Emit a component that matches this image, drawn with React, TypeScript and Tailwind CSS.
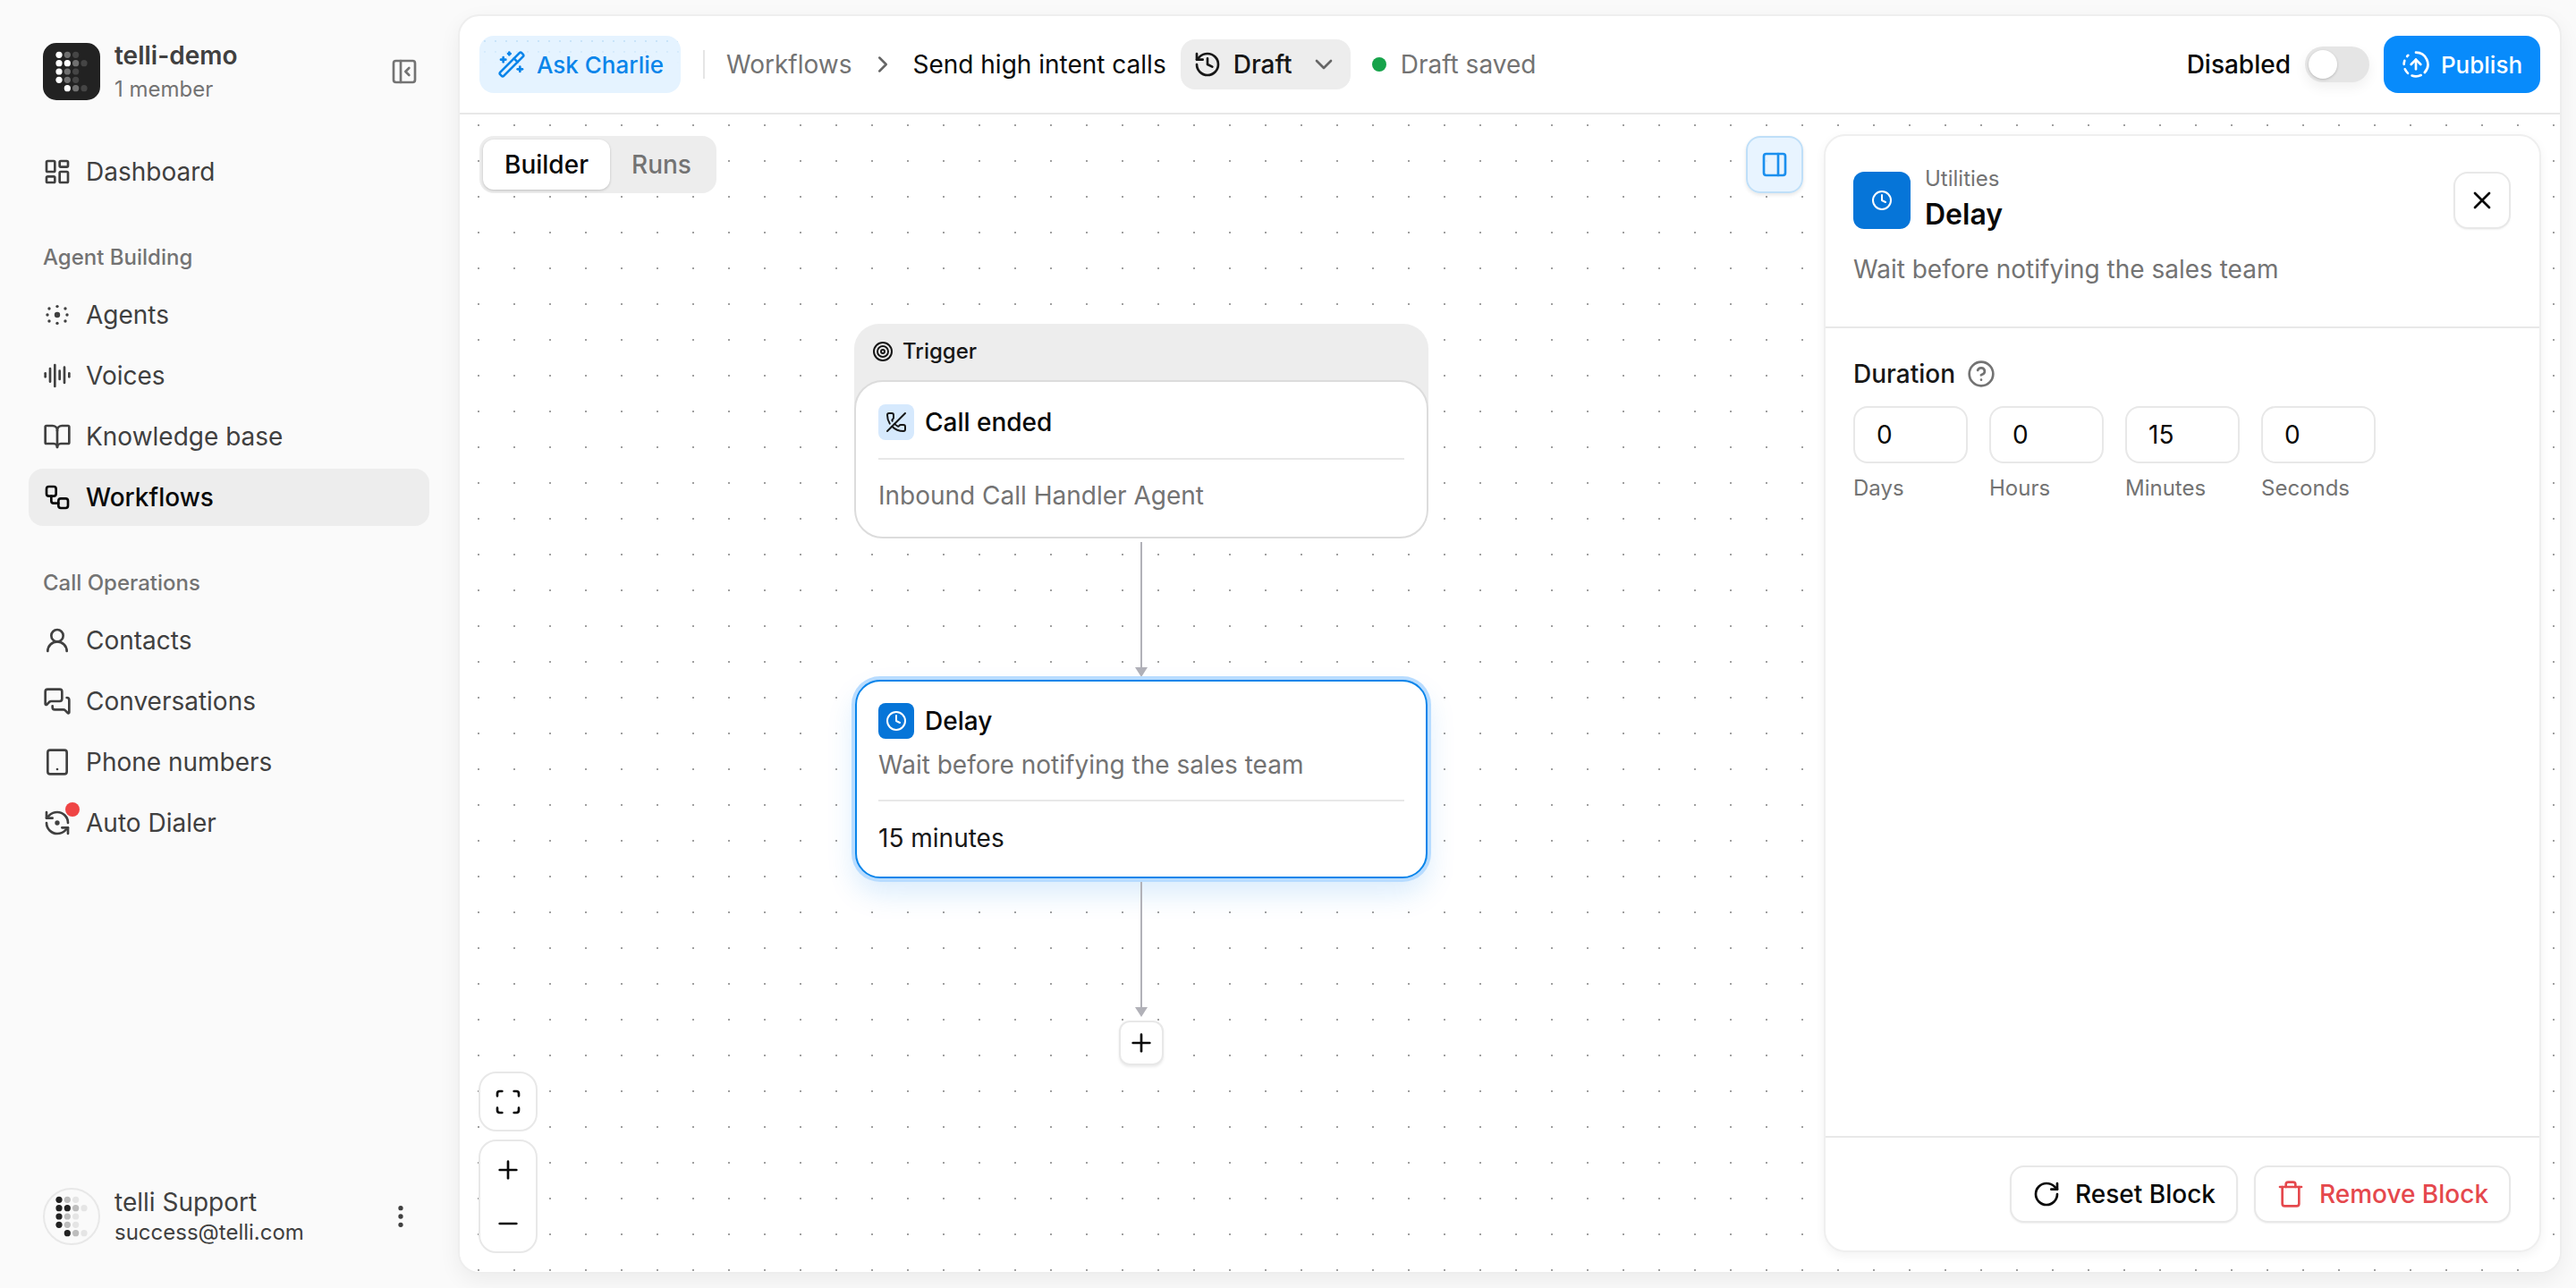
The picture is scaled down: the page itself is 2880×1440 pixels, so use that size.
import React from "react";
import {
  LayoutDashboard, AudioLines, BookOpen, Workflow, UserRound, MessagesSquare, Tablet, EllipsisVertical, WandSparkles,
  ChevronRight, ChevronDown, History, CircleFadingArrowUp, PanelRight, Clock, X, CircleHelp, RotateCw, Trash, Scan,
  Plus, Minus, PhoneOff, Target, PanelLeftClose, RefreshCcwDot,
} from "lucide-react";

const LOGO: (number | null)[][] = [
  [0, 1, 2, null],
  [0, 0, 1, 2],
  [0, 1, 2, null],
  [0, 1, 2, null],
  [null, 0, 1, 2],
];

function Mark({ colors }: { colors: string[] }) {
  return (
    <>
      {LOGO.map((row, r) =>
        row.map((c, i) =>
          c === null ? null : (
            <circle key={`${r}-${i}`} cx={18 + i * 9.33} cy={13.33 + r * 9.33} r={3.6} fill={colors[c]} />
          ),
        ),
      )}
    </>
  );
}

function AgentsIcon() {
  const pts = [[16, 6.6], [16, 25.4], [5, 16], [27, 16], [7, 9], [25, 9], [7, 23], [25, 23]];
  return (
    <svg width="32" height="32" viewBox="0 0 32 32" fill="currentColor">
      <circle cx="16" cy="16" r="3.2" />
      {pts.map(([x, y]) => (
        <circle key={`${x}-${y}`} cx={x} cy={y} r={1.7} />
      ))}
    </svg>
  );
}

function NavItem({ icon, label, active }: { icon: React.ReactNode; label: string; active?: boolean }) {
  return (
    <div className={`flex h-16 items-center gap-4 rounded-2xl px-4 text-[28px] ${active ? "bg-[#ededed] font-medium text-[#0a0a0a]" : "text-[#404040]"}`}>
      <span className="flex h-8 w-8 shrink-0 items-center justify-center">{icon}</span>
      <span>{label}</span>
    </div>
  );
}

function GroupLabel({ children }: { children: React.ReactNode }) {
  return <div className="flex h-10 items-center px-4 text-[24px] font-medium text-[#737373]">{children}</div>;
}

function Sidebar() {
  return (
    <aside className="flex h-full w-[512px] shrink-0 flex-col px-8 pb-12 pt-12">
      <div className="flex h-16 items-center px-4">
        <svg width="64" height="64" viewBox="0 0 64 64" className="shrink-0">
          <rect width="64" height="64" rx="15" fill="#222222" />
          <Mark colors={["#ffffff", "#707070", "#454545"]} />
        </svg>
        <div className="ml-4 flex flex-col">
          <span className="text-[28px] font-semibold leading-10 text-[#404040]">telli-demo</span>
          <span className="text-[24px] leading-9 text-[#737373]">1 member</span>
        </div>
        <PanelLeftClose className="ml-auto mr-[-4px] text-[#737373]" size={32} strokeWidth={2} />
      </div>

      <nav className="mt-12 flex flex-col gap-1">
        <NavItem icon={<LayoutDashboard size={32} strokeWidth={2} />} label="Dashboard" />
      </nav>
      <div className="mt-[44px]">
        <GroupLabel>Agent Building</GroupLabel>
      </div>
      <nav className="mt-3 flex flex-col gap-1">
        <NavItem icon={<AgentsIcon />} label="Agents" />
        <NavItem icon={<AudioLines size={32} strokeWidth={2} />} label="Voices" />
        <NavItem icon={<BookOpen size={32} strokeWidth={2} />} label="Knowledge base" />
        <NavItem icon={<Workflow size={32} strokeWidth={2} />} label="Workflows" active />
      </nav>
      <div className="mt-[44px]">
        <GroupLabel>Call Operations</GroupLabel>
      </div>
      <nav className="mt-3 flex flex-col gap-1">
        <NavItem icon={<UserRound size={32} strokeWidth={2} />} label="Contacts" />
        <NavItem icon={<MessagesSquare size={32} strokeWidth={2} />} label="Conversations" />
        <NavItem icon={<Tablet size={32} strokeWidth={2} />} label="Phone numbers" />
        <NavItem
          icon={
            <span className="relative">
              <RefreshCcwDot size={32} strokeWidth={2} />
              <span className="absolute right-[-9px] top-[-7px] h-4 w-4 rounded-full bg-[#ef4444]" />
            </span>
          }
          label="Auto Dialer"
        />
      </nav>

      <div className="mt-auto flex h-16 items-center px-4">
        <span className="flex h-16 w-16 shrink-0 items-center justify-center rounded-full border-2 border-[#e8e8e8]">
          <svg width="60" height="60" viewBox="2 2 60 60">
            <Mark colors={["#222222", "#bdbdbd", "#e5e5e5"]} />
          </svg>
        </span>
        <div className="ml-4 flex flex-col">
          <span className="text-[28px] leading-9 text-[#404040]">telli Support</span>
          <span className="text-[24px] leading-8 text-[#404040]">success@telli.com</span>
        </div>
        <EllipsisVertical className="ml-auto text-[#404040]" size={32} strokeWidth={2} />
      </div>
    </aside>
  );
}

function Header() {
  return (
    <header className="flex h-[110px] shrink-0 items-center justify-between border-b-2 border-[#e8e8e8] px-[22px]">
      <div className="flex items-center">
        <button className="relative flex h-16 w-[225px] items-center gap-3 overflow-hidden rounded-2xl bg-[#e5f3ff] pl-5 text-[26px] font-medium text-[#0a85ea]">
          <span className="absolute inset-x-0 top-0 h-8 bg-[radial-gradient(circle,#c2e0f8_1px,transparent_1.2px)] bg-[size:12px_12px] [mask-image:linear-gradient(to_bottom,black,transparent)]" />
          <WandSparkles className="relative" size={32} strokeWidth={2} />
          <span className="relative">Ask Charlie</span>
        </button>
        <span className="ml-[25px] h-8 w-0.5 bg-[#e5e5e5]" />
        <span className="ml-6 text-[28px] text-[#737373]">Workflows</span>
        <ChevronRight className="ml-5 text-[#666666]" size={30} strokeWidth={2} />
        <span className="ml-[18px] text-[28px] text-[#0a0a0a]">Send high intent calls</span>
        <div className="ml-4 flex h-14 w-[190px] items-center rounded-2xl bg-[#ededed] pl-[14px] text-[28px] font-medium text-[#171717]">
          <History size={32} strokeWidth={2} />
          <span className="ml-[13px]">Draft</span>
          <ChevronDown className="ml-auto mr-[14px] text-[#666666]" size={32} strokeWidth={2} />
        </div>
        <span className="ml-6 h-4 w-4 rounded-full bg-[#16a34a]" />
        <span className="ml-4 text-[28px] text-[#737373]">Draft saved</span>
      </div>
      <div className="flex items-center">
        <span className="text-[28px] font-medium text-[#0a0a0a]">Disabled</span>
        <span className="ml-4 flex h-10 w-[72px] items-center rounded-full bg-[#e5e5e5] px-1 shadow-[0_6px_14px_rgba(0,0,0,0.06)]">
          <span className="h-8 w-8 rounded-full bg-white shadow-[0_1px_3px_rgba(0,0,0,0.2)]" />
        </span>
        <button className="ml-4 flex h-16 w-[175px] items-center justify-center gap-3 rounded-2xl bg-[#088bfb] text-[26px] font-medium text-white">
          <CircleFadingArrowUp size={32} strokeWidth={2} />
          Publish
        </button>
      </div>
    </header>
  );
}

function Edge({ top, height }: { top: number; height: number }) {
  return (
    <svg className="absolute left-[754px]" style={{ top, height }} width="16" viewBox={`0 0 16 ${height}`}>
      <line x1="8" y1="0" x2="8" y2={height - 8} stroke="#b1b1b8" strokeWidth="2" />
      <polygon points={`1,${height - 11} 15,${height - 11} 8,${height}`} fill="#b1b1b8" />
    </svg>
  );
}

function Nodes() {
  return (
    <>
      <div className="absolute left-[441px] top-[234px] w-[642px]">
        <div className="h-[100px] rounded-t-[28px] bg-[#ededed] px-5 pt-[15px]">
          <div className="flex items-center gap-[10px] text-[24px] font-medium leading-8 text-[#171717]">
            <Target size={24} strokeWidth={2} />
            Trigger
          </div>
        </div>
        <div className="absolute inset-x-0 top-[63px] h-[177px] rounded-[32px] border-2 border-[#dcdcdc] bg-white px-[25px] pt-[25px]">
          <div className="flex items-center gap-3">
            <span className="flex h-10 w-10 items-center justify-center rounded-lg bg-[#d6e9fd] text-[#171717]">
              <PhoneOff size={24} strokeWidth={2} />
            </span>
            <span className="text-[28px] font-medium leading-10 text-[#0a0a0a]">Call ended</span>
          </div>
          <div className="mt-5 h-0.5 bg-[#e8e8e8]" />
          <div className="mt-5 text-[28px] leading-10 text-[#737373]">Inbound Call Handler Agent</div>
        </div>
      </div>

      <Edge top={478} height={151} />

      <div className="absolute left-[442px] top-[632px] h-[222px] w-[640px] rounded-[28px] border-2 border-[#0a85ea] bg-white px-6 pt-6 shadow-[0_0_0_4px_#b8dcff,0_16px_32px_rgba(10,133,234,0.16)]">
        <div className="flex items-center gap-3">
          <span className="flex h-10 w-10 items-center justify-center rounded-lg bg-[#0675d8] text-white">
            <Clock size={24} strokeWidth={2} />
          </span>
          <span className="text-[28px] font-medium leading-10 text-[#0a0a0a]">Delay</span>
        </div>
        <div className="mt-[9px] text-[28px] leading-10 text-[#737373]">Wait before notifying the sales team</div>
        <div className="mt-[19px] h-0.5 bg-[#e8e8e8]" />
        <div className="mt-[21px] text-[28px] leading-10 text-[#171717]">15 minutes</div>
      </div>

      <Edge top={858} height={151} />

      <button className="absolute left-[737px] top-[1013px] flex h-[50px] w-[50px] items-center justify-center rounded-xl border-2 border-[#e8e8e8] bg-white text-[#0a0a0a] shadow-[0_2px_3px_rgba(0,0,0,0.08)]">
        <Plus size={32} strokeWidth={2} />
      </button>
    </>
  );
}

function DurationField({ value, label }: { value: string; label: string }) {
  return (
    <div className="flex w-[128px] flex-col">
      <div className="flex h-16 items-center rounded-2xl border-2 border-[#e8e8e8] bg-white pl-6 text-[28px] text-[#0a0a0a]">{value}</div>
      <div className="mt-[10px] text-[24px] leading-9 text-[#737373]">{label}</div>
    </div>
  );
}

function Panel() {
  return (
    <section className="absolute bottom-[22px] right-[21px] top-[22px] flex w-[802px] flex-col rounded-[24px] border-2 border-[#efefef] bg-white shadow-[0_4px_12px_rgba(0,0,0,0.05)]">
      <div className="h-[215px] shrink-0 border-b-2 border-[#e8e8e8] pl-[31px] pr-8 pt-10">
        <div className="flex h-16 items-center">
          <span className="flex h-16 w-16 items-center justify-center rounded-xl bg-[#0675d8] text-white">
            <Clock size={24} strokeWidth={2} />
          </span>
          <div className="mb-1 ml-4 flex flex-col">
            <span className="text-[24px] leading-9 text-[#737373]">Utilities</span>
            <span className="text-[32px] font-semibold leading-[44px] text-[#0a0a0a]">Delay</span>
          </div>
          <button className="ml-auto flex h-16 w-16 items-center justify-center rounded-2xl border-2 border-[#e8e8e8] bg-white text-[#0a0a0a] shadow-[0_1px_2px_rgba(0,0,0,0.06)]">
            <X size={32} strokeWidth={2} />
          </button>
        </div>
        <p className="mt-[25px] text-[28px] leading-10 text-[#737373]">Wait before notifying the sales team</p>
      </div>
      <div className="flex-1 pl-[31px] pr-8 pt-[33px]">
        <div className="flex items-center gap-[13px]">
          <span className="text-[28px] font-medium leading-9 text-[#171717]">Duration</span>
          <CircleHelp className="text-[#737373]" size={32} strokeWidth={2} />
        </div>
        <div className="mt-[18px] flex gap-6">
          <DurationField value="0" label="Days" />
          <DurationField value="0" label="Hours" />
          <DurationField value="15" label="Minutes" />
          <DurationField value="0" label="Seconds" />
        </div>
      </div>
      <div className="flex h-[128px] shrink-0 items-center justify-end gap-[18px] border-t-2 border-[#e8e8e8] pr-8">
        <button className="flex h-16 w-[255px] items-center justify-center gap-4 rounded-2xl border-2 border-[#e8e8e8] bg-white text-[28px] font-medium text-[#0a0a0a] shadow-[0_1px_2px_rgba(0,0,0,0.06)]">
          <RotateCw size={32} strokeWidth={2} />
          Reset Block
        </button>
        <button className="flex h-16 w-[287px] items-center justify-center gap-4 rounded-2xl border-2 border-[#e8e8e8] bg-white text-[28px] font-medium text-[#e5484d] shadow-[0_1px_2px_rgba(0,0,0,0.06)]">
          <Trash size={32} strokeWidth={2} />
          Remove Block
        </button>
      </div>
    </section>
  );
}

function Canvas() {
  return (
    <div className="relative flex-1 bg-white bg-[radial-gradient(circle,#a0a0a0_0.9px,transparent_1.3px)] bg-[size:40px_40px] bg-[position:1px_-8px]">
      <div className="absolute left-[22px] top-6 flex h-16 w-[265px] items-center rounded-2xl bg-[#ededed] p-1 text-[28px] font-medium">
        <span className="flex h-14 w-[142px] items-center justify-center rounded-xl bg-white text-[#0a0a0a] shadow-[0_1px_3px_rgba(0,0,0,0.2)]">Builder</span>
        <span className="flex flex-1 items-center justify-center text-[#737373]">Runs</span>
      </div>
      <button className="absolute left-[1438px] top-6 flex h-16 w-16 items-center justify-center rounded-2xl border-2 border-[#bfdff8] bg-[#e5f3ff]/90 text-[#1b8fee] shadow-[0_2px_4px_rgba(0,0,0,0.1)]">
        <PanelRight size={32} strokeWidth={2} />
      </button>

      <Nodes />
      <Panel />

      <button className="absolute left-[21px] top-[1070px] flex h-[67px] w-[66px] items-center justify-center rounded-[20px] border-2 border-[#e8e8e8] bg-white text-[#0a0a0a]">
        <Scan size={32} strokeWidth={2} />
      </button>
      <div className="absolute left-[21px] top-[1146px] flex h-[127px] w-[66px] flex-col items-center justify-between rounded-[20px] border-2 border-[#e8e8e8] bg-white pb-[15px] pt-4 text-[#0a0a0a]">
        <Plus size={32} strokeWidth={2} />
        <Minus size={32} strokeWidth={2} />
      </div>
    </div>
  );
}

export default function App() {
  return (
    <div className="flex h-[1440px] w-[2880px] overflow-hidden bg-[#fafafa] font-['Inter',sans-serif]">
      <Sidebar />
      <main className="mb-4 mr-4 mt-4 flex min-w-0 flex-1 flex-col overflow-hidden rounded-[24px] border-2 border-[#eeeeee] bg-white shadow-[0_8px_24px_rgba(0,0,0,0.06)]">
        <Header />
        <Canvas />
      </main>
    </div>
  );
}
